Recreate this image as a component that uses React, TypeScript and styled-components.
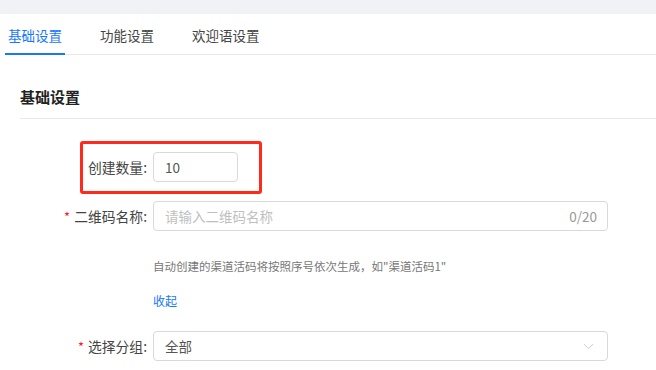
import styled, { createGlobalStyle } from 'styled-components';
import { ChevronDown } from 'lucide-react';

const GlobalStyle = createGlobalStyle`
    body {
        margin: 0;
        background: #fff;
        font-family: "Noto Sans CJK SC", "Noto Sans", sans-serif;
        color: #333;
    }
`;

const Page = styled.div`
    width: 656px;
    height: 370px;
    overflow: hidden;
`;
const TopBand = styled.div`
    height: 14px;
    background: #f0f2f5;
`;
const TabBar = styled.div`
    display: flex;
    gap: 32px;
    height: 40px;
    margin-left: 5px;
    border-bottom: 1px solid #e8e8e8;
`;
const Tab = styled.div<{ $active?: boolean }>`
    display: flex;
    align-items: center;
    padding: 3px 3px 0;
    margin-bottom: -1px;
    font-size: 13.5px;
    color: ${p => (p.$active ? '#1677ff' : '#444')};
    border-bottom: 2px solid ${p => (p.$active ? '#1677ff' : 'transparent')};
`;
const Body = styled.div`
    padding-left: 20px;
`;
const SectionTitle = styled.div`
    padding: 31px 0 10px;
    line-height: 22px;
    font-size: 15px;
    font-weight: bold;
    color: #222;
    border-bottom: 1px solid #e8e8e8;
`;
const Form = styled.div`
    position: relative;
    padding-top: 33px;
`;
const Row = styled.div<{ $gap?: number }>`
    display: flex;
    align-items: center;
    margin-bottom: ${p => p.$gap ?? 0}px;
`;
const Label = styled.div`
    flex: 0 0 133px;
    box-sizing: border-box;
    padding-right: 6px;
    text-align: right;
    font-size: 13.8px;
    color: #444;
    line-height: 20px;
`;
const Star = styled.span`
    color: #f5222d;
    margin-right: 4px;
    font-size: 13px;
`;
const Field = styled.div<{ $width: number }>`
    width: ${p => p.$width}px;
    height: 30px;
    box-sizing: border-box;
    border: 1px solid #d9d9d9;
    border-radius: 4px;
    padding: 0 10px 0 11px;
    display: flex;
    align-items: center;
    justify-content: space-between;
    font-size: 13.5px;
`;
const Value = styled.span<{ $placeholder?: boolean }>`
    color: ${p => (p.$placeholder ? '#bfbfbf' : '#555')};
`;
const Count = styled.span`
    color: #999;
`;
const Extra = styled.div<{ $gap: number }>`
    margin-left: 133px;
    font-size: 11.5px;
    line-height: 18px;
    color: #777;
    margin-bottom: ${p => p.$gap}px;
`;
const Link = styled(Extra)`
    font-size: 12px;
    color: #1677ff;
`;
const Highlight = styled.div`
    position: absolute;
    left: 60px;
    top: 22px;
    width: 182px;
    height: 53px;
    box-sizing: border-box;
    border: 3px solid #ff2a1a;
    border-radius: 3px;
    pointer-events: none;
`;

export default function App() {
    return (
        <Page>
            <GlobalStyle />
            <TopBand />
            <TabBar>
                <Tab $active>基础设置</Tab>
                <Tab>功能设置</Tab>
                <Tab>欢迎语设置</Tab>
            </TabBar>
            <Body>
                <SectionTitle>基础设置</SectionTitle>
                <Form>
                    <Row $gap={19}>
                        <Label>创建数量:</Label>
                        <Field $width={85}>
                            <Value>10</Value>
                        </Field>
                    </Row>
                    <Row $gap={26}>
                        <Label><Star>*</Star>二维码名称:</Label>
                        <Field $width={455}>
                            <Value $placeholder>请输入二维码名称</Value>
                            <Count>0/20</Count>
                        </Field>
                    </Row>
                    <Extra $gap={17}>自动创建的渠道活码将按照序号依次生成，如"渠道活码1"</Extra>
                    <Link $gap={21}>收起</Link>
                    <Row>
                        <Label><Star>*</Star>选择分组:</Label>
                        <Field $width={455}>
                            <Value>全部</Value>
                            <ChevronDown size={17} strokeWidth={1.1} color="#bfbfbf" />
                        </Field>
                    </Row>
                    <Highlight />
                </Form>
            </Body>
        </Page>
    );
}
